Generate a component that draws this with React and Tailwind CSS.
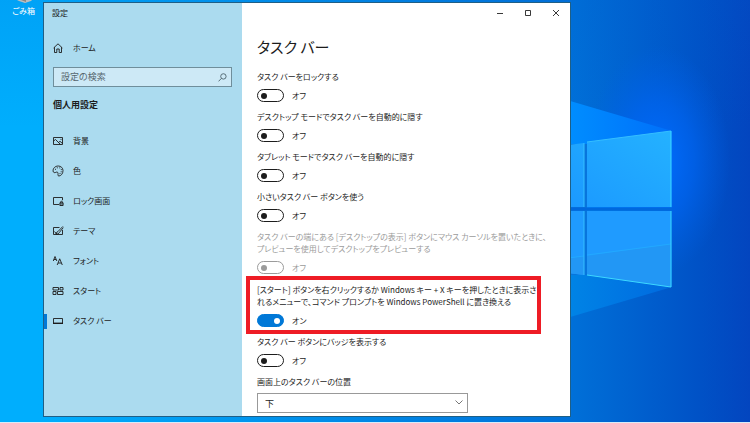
import { useState } from 'react';

const NAV_ITEMS = [
  { id: 'background', label: '背景', Icon: PictureIcon },
  { id: 'colors', label: '色', Icon: PaletteIcon },
  { id: 'lock', label: 'ロック画面', Icon: LockScreenIcon },
  { id: 'themes', label: 'テーマ', Icon: ThemeIcon },
  { id: 'fonts', label: 'フォント', Icon: FontIcon },
  { id: 'start', label: 'スタート', Icon: StartIcon },
  { id: 'taskbar', label: 'タスク バー', Icon: TaskbarIcon },
];

function Glyph({ children }) {
  return (
    <svg
      viewBox="0 0 12 12"
      className="h-3 w-3 shrink-0"
      fill="none"
      stroke="currentColor"
      strokeWidth="0.9"
      aria-hidden="true"
    >
      {children}
    </svg>
  );
}

function HomeIcon() {
  return (
    <Glyph>
      <path d="M1.6 6 6 1.8 10.4 6M2.5 5.2v5.3h2.300V7h2.400v3.500h2.300V5.200" />
    </Glyph>
  );
}

function PictureIcon() {
  return (
    <Glyph>
      <path d="M1.500 2.500h9v7h-9zM1.500 6l2-1.500L8.500 9.500M6.500 7.500 8 6.300l2.500 2.200" />
      <path d="M8.500 4.400h1" />
    </Glyph>
  );
}

function PaletteIcon() {
  return (
    <Glyph>
      <path d="M1.1 6.2C.8 3.2 3.200 1 6.300 1c2.700 0 4.700 2 4.700 4.600C11 8.700 8.900 11 6.900 11c-1.800 0-.3-2.300-1.100-3.500C4.900 6.100 3.600 8 2.200 7.600c-.6-.2-1-.7-1.100-1.400z" />
      <path d="M3 4.300h1M4.800 2.800h1M7.300 2.900h1M8.800 4.600h1M8.700 6.800h1M7.500 8.600h1" />
    </Glyph>
  );
}

function LockScreenIcon() {
  return (
    <Glyph>
      <path d="M7 9.500H1.500v-7h9v2.700" />
      <path d="M7.900 7.800h3.200v2.700H7.900z" fill="currentColor" fillOpacity="0.4" />
      <path d="M8.500 7.800v-.6c0-1.300 2-1.300 2 0v.6" />
    </Glyph>
  );
}

function ThemeIcon() {
  return (
    <Glyph>
      <path d="M7.500 2.500h-6v7h9V5" />
      <path d="m10.900 1.400-5 5.200-1 .5-1 1.800 2 .1 1.200-1.200 4.200-5.200M2.500 6.500 5 9.500" />
    </Glyph>
  );
}

function FontIcon() {
  return (
    <Glyph>
      <path d="m1.300 6 1.700-4.500L4.800 6M1.900 4.500h2.200M5.200 10l2.500-6.200 2.600 6.200M6 8h3.400" />
    </Glyph>
  );
}

function StartIcon() {
  return (
    <Glyph>
      <path d="M1 2.500h5.500v2.500H1zM1 6.500h3v3H1zM5.500 6.500h5.500v3H5.500zM8 2.500h3v2.500H8z" />
    </Glyph>
  );
}

function TaskbarIcon() {
  return (
    <Glyph>
      <path d="M1.500 3.500h9v5h-9z" />
      <path d="M1 8.300h10" strokeWidth="1.400" />
    </Glyph>
  );
}

function Wallpaper() {
  return (
    <div className="absolute inset-0 overflow-hidden bg-linear-to-r from-[#00aefd] from-5% via-[#0070d8] via-76% to-[#0345bf]">
      <div className="absolute inset-x-0 top-0 h-32 bg-linear-to-b from-[#0060d0]/15 to-transparent" />
      <svg
        viewBox="0 0 190 423"
        className="absolute top-0 right-0 h-[423px] w-[190px]"
        aria-hidden="true"
      >
        <defs>
          <radialGradient id="glow">
            <stop offset="0" stopColor="#006dff" />
            <stop offset="0.5" stopColor="#0065f4" stopOpacity="0.65" />
            <stop offset="1" stopColor="#0060e8" stopOpacity="0" />
          </radialGradient>
          <linearGradient id="beamTop" x1="0" x2="1">
            <stop offset="0" stopColor="#0090ff" />
            <stop offset="1" stopColor="#006ffa" />
          </linearGradient>
          <linearGradient id="beamBottom" x1="0" x2="1">
            <stop offset="0" stopColor="#0086e6" />
            <stop offset="1" stopColor="#006ae0" />
          </linearGradient>
          <linearGradient id="pane" x1="0" y1="1" x2="1" y2="0">
            <stop offset="0" stopColor="#1b98ff" />
            <stop offset="1" stopColor="#24b2ff" />
          </linearGradient>
        </defs>
        <ellipse cx="98" cy="160" rx="72" ry="115" fill="url(#glow)" />
        <path d="M0 98 112 131v78H0z" fill="url(#beamTop)" />
        <path d="M0 209h112v78L0 320z" fill="url(#beamBottom)" />
        <path d="M0 144h27v131H0z" fill="#0875dc" />
        <path d="M0 146 24 143v64H0zM27 142l84-11v76H27z" fill="url(#pane)" />
        <path d="M0 211h24v64l-24-3zM27 211h84v76l-84-12z" fill="#1f9bff" />
        <path d="m0 260 24-4v19l-24-3zM27 256l84-12v43l-84-12z" fill="#2297f5" />
        <path d="m0 259 24-3M27 255l84-11" stroke="#22a9ff" />
        <path d="M24 143v64M24 211v64M27 142l84-11" stroke="#35bfff" fill="none" />
        <path d="M111 131v76M111 211v76l-84-12" stroke="#3bd7ff" fill="none" />
        <path d="M0 209h112" stroke="#0068dd" strokeWidth="3" />
      </svg>
    </div>
  );
}

function RecycleBin() {
  return (
    <a href="#recycle-bin" className="flex flex-col items-center text-[8px] leading-3 text-white">
      <svg viewBox="0 0 18 4" className="h-1 w-[18px]" aria-hidden="true">
        <path d="M2 0h15l-1 1-6 2-6-2z" fill="#b9bec2" />
        <path d="M6 0h5v2z" fill="#8b8780" />
      </svg>
      <span className="mt-px whitespace-nowrap">ごみ箱</span>
    </a>
  );
}

function Sidebar({ active, onSelect }) {
  return (
    <aside className="flex w-[198px] shrink-0 flex-col bg-[#abdbef]">
      <div className="px-2 pt-1 leading-3">設定</div>
      <a href="#home" className="mt-[23px] flex h-3 items-center gap-2 px-2">
        <HomeIcon />
        <span className="pl-px">ホーム</span>
      </a>
      <label className="mt-[13px] mr-[10px] ml-[9px] flex h-5 items-center border border-[#6f8e9b] bg-[#cde9f6] pr-1 pl-[7px]">
        <input
          type="text"
          aria-label="設定の検索"
          placeholder="設定の検索"
          className="w-full min-w-0 bg-transparent text-[9px] outline-none placeholder:text-[#56666e]"
        />
        <svg
          viewBox="0 0 10 10"
          className="h-[9px] w-[9px] shrink-0 text-[#4c626c]"
          fill="none"
          stroke="currentColor"
          aria-hidden="true"
        >
          <circle cx="6" cy="3.800" r="3" />
          <path d="M3.800 6 .6 9.300" />
        </svg>
      </label>
      <h2 className="mt-3 px-[9px] text-[9px] leading-3 font-bold">個人用設定</h2>
      <nav className="mt-[15px] flex flex-col">
        {NAV_ITEMS.map(({ id, label, Icon }) => (
          <button
            key={id}
            type="button"
            onClick={() => onSelect(id)}
            aria-current={id === active ? 'page' : undefined}
            className="flex h-[30px] items-center text-left"
          >
            <span className={id === active ? 'h-[15px] w-[3px] bg-[#0078d7]' : 'h-[15px] w-[3px]'} />
            <span className="flex items-center gap-2 pl-[5px]">
              <Icon />
              <span className="pl-px">{label}</span>
            </span>
          </button>
        ))}
      </nav>
    </aside>
  );
}

function Toggle({ label, defaultOn = false, disabled = false }) {
  const [on, setOn] = useState(defaultOn);

  return (
    <label className={disabled ? 'block text-[#9b9b9b]' : 'block'}>
      <span className="block leading-3 whitespace-nowrap">{label}</span>
      <span className="mt-[6px] flex h-[13px] items-center gap-2">
        <input
          type="checkbox"
          role="switch"
          checked={on}
          disabled={disabled}
          onChange={(e) => setOn(e.target.checked)}
          className="peer sr-only"
        />
        <span className="flex h-[13px] w-[27px] items-center rounded-full border border-current px-[3px] peer-checked:justify-end peer-checked:border-[#0078d7] peer-checked:bg-[#0078d7] peer-checked:text-white">
          <span className="h-[6px] w-[6px] rounded-full bg-current" />
        </span>
        <span>{on ? 'オン' : 'オフ'}</span>
      </span>
    </label>
  );
}

function WindowControls() {
  const controls = [
    { name: '最小化', d: 'M1 4.500h6' },
    { name: '最大化', d: 'M1.500 1.500h5v5h-5z' },
    { name: '閉じる', d: 'm1 1 6 6M7 1 1 7' },
  ];

  return (
    <div className="flex justify-end">
      {controls.map(({ name, d }) => (
        <button key={name} type="button" aria-label={name} className="flex h-5 w-7 items-center justify-center">
          <svg viewBox="0 0 8 8" className="h-2 w-2" fill="none" stroke="#222" strokeWidth="0.9" aria-hidden="true">
            <path d={d} />
          </svg>
        </button>
      ))}
    </div>
  );
}

function TaskbarSettings() {
  return (
    <main className="min-w-0 flex-1 bg-white">
      <WindowControls />
      <div className="px-[15px] pb-[3px]">
        <h1 className="mt-3 text-[15px] leading-6">タスク バー</h1>
        <div className="mt-3 flex flex-col gap-[9px]">
          <Toggle label="タスク バーをロックする" />
          <Toggle label="デスクトップ モードでタスク バーを自動的に隠す" />
          <Toggle label="タブレット モードでタスク バーを自動的に隠す" />
          <Toggle label="小さいタスク バー ボタンを使う" />
          <Toggle
            disabled
            label={
              <>
                タスク バーの端にある [デスクトップの表示] ボタンにマウス カーソルを置いたときに、
                <br />
                プレビューを使用してデスクトップをプレビューする
              </>
            }
          />
        </div>
        <div className="mt-[2px] -ml-[11px] w-[295px] border-4 border-[#ee1c25] px-[7px] pt-1 pb-[3px]">
          <Toggle
            defaultOn
            label={
              <>
                [スタート] ボタンを右クリックするか Windows キー + X キーを押したときに表示さ
                <br />
                れるメニューで、コマンド プロンプトを Windows PowerShell に置き換える
              </>
            }
          />
        </div>
        <div className="mt-[2px]">
          <Toggle label="タスク バー ボタンにバッジを表示する" />
        </div>
        <label htmlFor="position" className="mt-[9px] block leading-3">
          画面上のタスク バーの位置
        </label>
        <div className="relative mt-[5px] w-[211px]">
          <select
            id="position"
            defaultValue="下"
            className="block h-5 w-full appearance-none border border-[#999] bg-white px-[7px] text-[9px] leading-none"
          >
            <option>下</option>
            <option>上</option>
            <option>左</option>
            <option>右</option>
          </select>
          <svg
            viewBox="0 0 8 5"
            className="pointer-events-none absolute top-[7px] right-[5px] h-[5px] w-2"
            fill="none"
            stroke="#777"
            aria-hidden="true"
          >
            <path d="m.5.5 3.500 3.500L7.500.5" />
          </svg>
        </div>
      </div>
    </main>
  );
}

export default function App() {
  const [active, setActive] = useState('taskbar');

  return (
    <div className="flex min-h-screen flex-col font-['Noto_Sans_CJK_JP','Open_Sans',sans-serif] text-[8px] leading-3 text-[#1c1c1c] [font-feature-settings:'palt']">
      <div className="relative flex flex-1 items-start">
        <Wallpaper />
        <div className="relative flex w-[43px] shrink-0 justify-center pl-1">
          <RecycleBin />
        </div>
        <div className="relative mt-[2px] mr-[179px] flex min-w-0 flex-1 border border-[#1f5f86]">
          <Sidebar active={active} onSelect={setActive} />
          <TaskbarSettings />
        </div>
      </div>
      <div className="relative h-px bg-[#d8ecf8]" />
    </div>
  );
}
